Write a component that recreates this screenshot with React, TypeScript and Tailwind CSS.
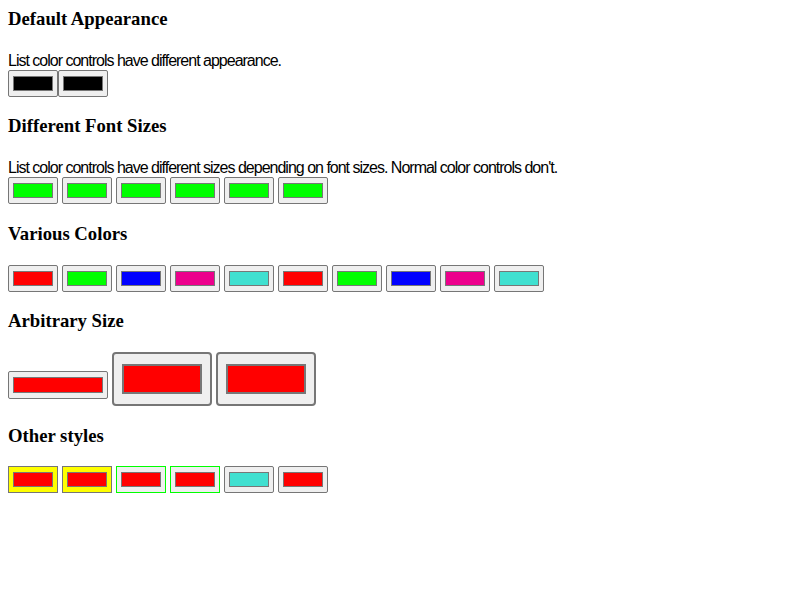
type SwatchProps = {
  color: string;
  frame?: string;
  big?: boolean;
  wide?: boolean;
};

function Swatch({ color, frame = "", big = false, wide = false }: SwatchProps) {
  if (big) {
    return (
      <span className="inline-flex w-[100px] h-[54px] border-2 border-[#767676] rounded-[4px] bg-[#efefef] px-[8px] py-[10px] shrink-0">
        <span
          className="block w-full h-full border-2 border-[#777777]"
          style={{ backgroundColor: color }}
        />
      </span>
    );
  }
  return (
    <span
      className={
        (wide ? "w-[100px] h-[28px] mt-[19px] " : "w-[50px] h-[27px] ") +
        "inline-flex border px-[4px] py-[5px] shrink-0 " +
        (frame || "border-[#767676] rounded-[2px] bg-[#efefef]")
      }
    >
      <span
        className="block w-full h-full border border-[#777777]"
        style={{ backgroundColor: color }}
      />
    </span>
  );
}

const various = ["#ff0000", "#00ff00", "#0000ff", "#ec008c", "#40e0d0"];

export default function App() {
  const heading = "h-[22px] text-[18.72px] leading-[22px] font-bold font-['Liberation_Serif',serif]";
  const text =
    "h-[18px] text-[16px] leading-[18px] tracking-[-1px] font-['Liberation_Sans_Narrow','Liberation_Sans',sans-serif]";

  return (
    <div className="bg-white text-black px-2 pt-2 min-h-[600px]">
      <h3 className={heading}>Default Appearance</h3>
      <p className={text + " mt-[22px]"}>List color controls have different appearance.</p>
      <div className="flex">
        <Swatch color="#000000" />
        <Swatch color="#000000" />
      </div>

      <h3 className={heading + " mt-[18px]"}>Different Font Sizes</h3>
      <p className={text + " mt-[22px]"}>
        List color controls have different sizes depending on font sizes. Normal color controls don't.
      </p>
      <div className="flex gap-1">
        {[0, 1, 2, 3, 4, 5].map((i) => (
          <Swatch key={i} color="#00ff00" />
        ))}
      </div>

      <h3 className={heading + " mt-[19px]"}>Various Colors</h3>
      <div className="flex gap-1 mt-[20px]">
        {[...various, ...various].map((c, i) => (
          <Swatch key={i} color={c} />
        ))}
      </div>

      <h3 className={heading + " mt-[18px]"}>Arbitrary Size</h3>
      <div className="flex items-start gap-1 mt-[20px]">
        <Swatch color="#ff0000" wide />
        <Swatch color="#ff0000" big />
        <Swatch color="#ff0000" big />
      </div>

      <h3 className={heading + " mt-[19px]"}>Other styles</h3>
      <div className="flex gap-1 mt-[19px]">
        <Swatch color="#ff0000" frame="border-[#767676] bg-[#ffff00]" />
        <Swatch color="#ff0000" frame="border-[#767676] bg-[#ffff00]" />
        <Swatch color="#ff0000" frame="border-[#00ff00] bg-[#efefef]" />
        <Swatch color="#ff0000" frame="border-[#00ff00] bg-[#efefef]" />
        <Swatch color="#40e0d0" />
        <Swatch color="#ff0000" />
      </div>
    </div>
  );
}
